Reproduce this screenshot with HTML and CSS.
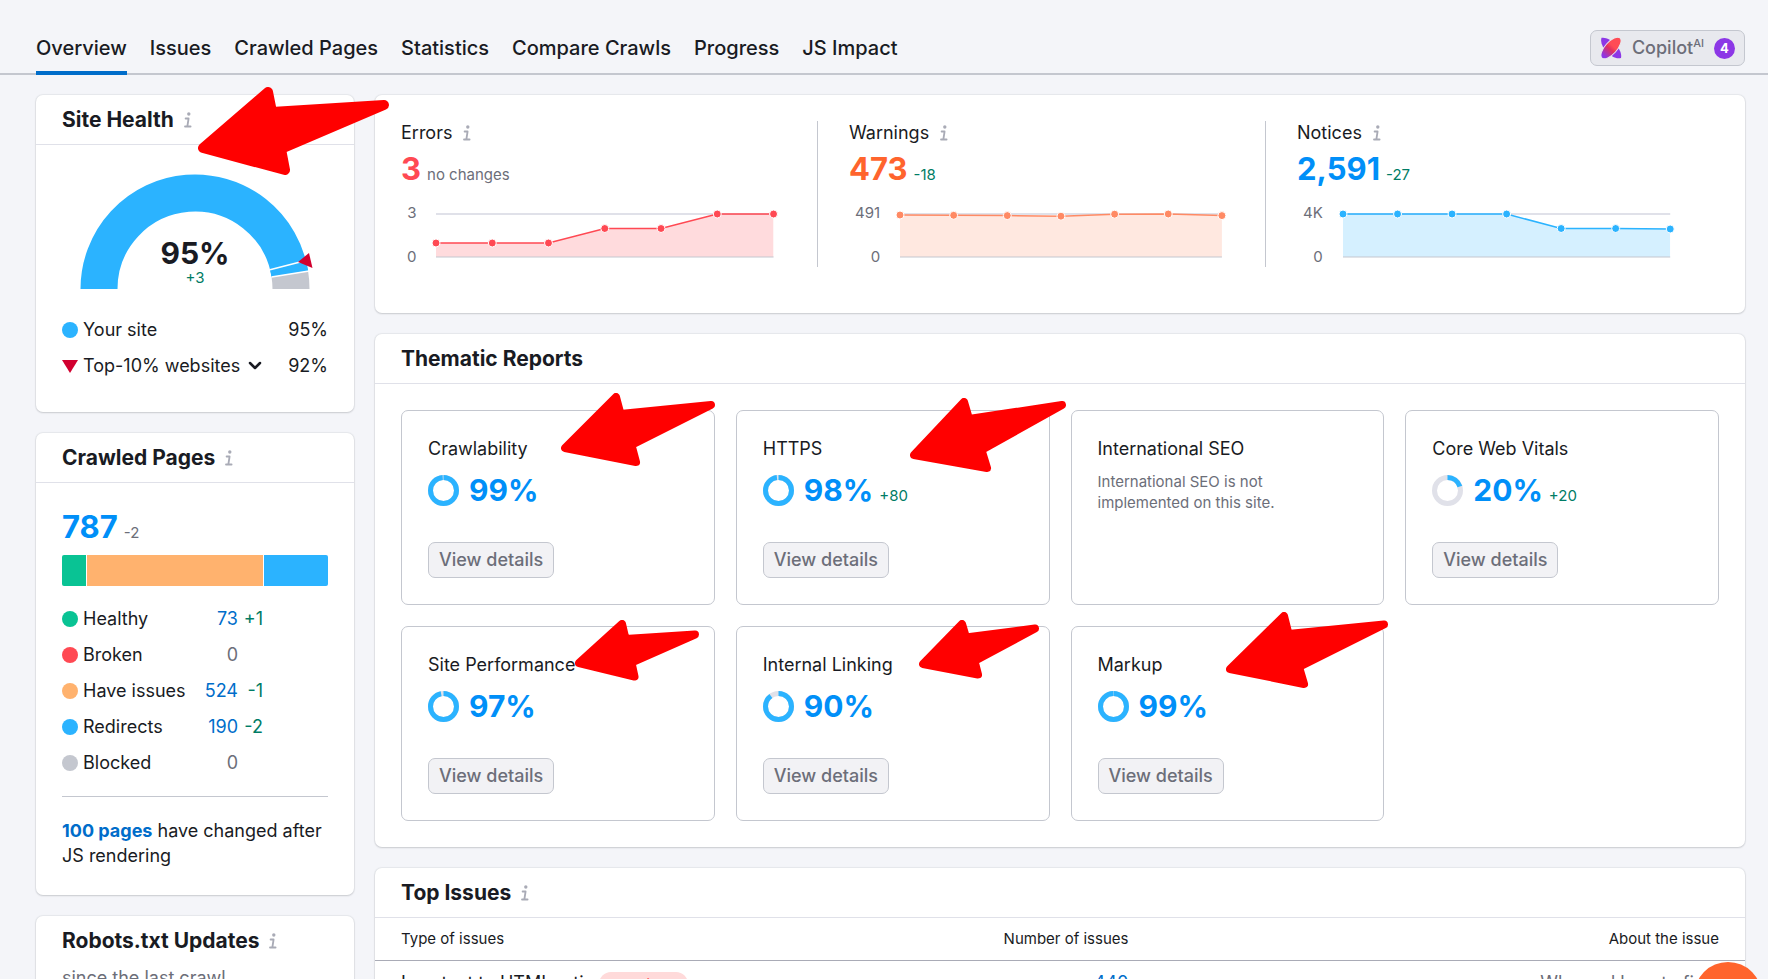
FILE: index.html
```html
<!DOCTYPE html>
<html lang="en">
<head>
	<meta charset="UTF-8">
	<meta name="viewport" content="width=device-width, initial-scale=1.0">
	<title>Site Audit: Overview</title>
	<link rel="stylesheet" href="styles.css">
</head>
<body>
	<svg class="sprite" aria-hidden="true">
		<symbol id="info" viewBox="0 0 8 16">
			<circle cx="4.8" cy="2" r="1.7" fill="currentColor"/>
			<path d="M1.6 6.5h3L3.4 14M1 14.5h5.6" fill="none" stroke="currentColor" stroke-width="1.8" stroke-linecap="round" stroke-linejoin="round"/>
		</symbol>
	</svg>

	<header class="topbar">
		<nav class="tabs">
			<a class="tab active" href="#overview">Overview</a>
			<a class="tab" href="#issues">Issues</a>
			<a class="tab" href="#crawled">Crawled Pages</a>
			<a class="tab" href="#statistics">Statistics</a>
			<a class="tab" href="#compare">Compare Crawls</a>
			<a class="tab" href="#progress">Progress</a>
			<a class="tab" href="#js">JS Impact</a>
		</nav>
		<button class="copilot" type="button">
			<svg class="copilot-icon" viewBox="0 0 22 22" aria-hidden="true">
				<defs>
					<linearGradient id="leaf" x1="0" x2="1">
						<stop offset=".1" stop-color="#8c37e6"/>
						<stop offset=".45" stop-color="#e0305f"/>
						<stop offset=".6" stop-color="#ff4b55"/>
					</linearGradient>
				</defs>
				<path d="M1.500 .800C6 0 11 3 15 7C19 11 22 16 21 21C16 22.500 11 19 7 15C3 11 0 6 1.500 .800Z" fill="#8c37e6"/>
				<ellipse cx="11" cy="11" rx="13.500" ry="6" transform="rotate(-48 11 11)" fill="url(#leaf)" stroke="#e8e9ee"/>
			</svg>
			<span>Copilot<sup>AI</sup></span>
			<span class="copilot-count">4</span>
		</button>
	</header>

	<main class="layout">
		<aside class="column">
			<section class="card health">
				<h2 class="card-title">Site Health <svg class="info"><use href="#info"/></svg></h2>
				<div class="gauge">
					<svg viewBox="0 0 236 116" aria-hidden="true">
						<g fill="none" stroke-width="37">
							<path d="M19 115A96 96 0 0 1 209.818 99.982" stroke="#2bb3ff"/>
							<path d="M207.985 91.126A96 96 0 0 1 209.818 99.982" stroke="#2bb3ff"/>
							<path d="M209.818 99.982A96 96 0 0 1 211 115" stroke="#c4c7cf"/>
						</g>
						<path d="M190 95.700L226 86.400M191.500 103L229.100 97" stroke="#fff" stroke-width="1.500"/>
						<path d="M218 88L229 79L232.500 94Z" fill="#d1002f"/>
					</svg>
					<div class="gauge-value">
						<strong>95%</strong>
						<span class="good">+3</span>
					</div>
				</div>
				<ul class="legend">
					<li><i class="dot blue"></i>Your site <span class="pct">95%</span></li>
					<li>
						<svg class="marker" viewBox="0 0 16 14" aria-hidden="true"><path d="M0 1h16L8 14Z" fill="#d1002f"/></svg>
						<button class="picker" type="button">Top-10% websites
							<svg viewBox="0 0 14 10" aria-hidden="true"><path d="M2 2l5 5 5-5" fill="none" stroke="currentColor" stroke-width="2.500" stroke-linecap="round" stroke-linejoin="round"/></svg>
						</button>
						<span class="pct">92%</span>
					</li>
				</ul>
				<svg class="arrow arrow-health" viewBox="0 0 191 88" stroke-width="10" aria-hidden="true"><path d="M5 61L70 5L74 25L186 18L83 62L87 83Z"/></svg>
			</section>

			<section class="card crawled">
				<h2 class="card-title">Crawled Pages <svg class="info"><use href="#info"/></svg></h2>
				<div class="crawled-body">
					<p class="figure"><strong>787</strong> <small>-2</small></p>
					<div class="stack">
						<span class="green" style="flex-grow: 73"></span>
						<span class="orange" style="flex-grow: 524"></span>
						<span class="blue" style="flex-grow: 190"></span>
					</div>
					<table class="statuses">
						<tr><th><i class="dot green"></i>Healthy</th><td><a href="#healthy">73</a></td><td class="good">+1</td></tr>
						<tr><th><i class="dot red"></i>Broken</th><td>0</td><td></td></tr>
						<tr><th><i class="dot orange"></i>Have issues</th><td><a href="#have-issues">524</a></td><td class="good">-1</td></tr>
						<tr><th><i class="dot blue"></i>Redirects</th><td><a href="#redirects">190</a></td><td class="good">-2</td></tr>
						<tr><th><i class="dot gray"></i>Blocked</th><td>0</td><td></td></tr>
					</table>
					<p class="js-note"><a href="#changed">100 pages</a> have changed after JS rendering</p>
				</div>
			</section>

			<section class="card robots">
				<h2 class="card-title">Robots.txt Updates <svg class="info"><use href="#info"/></svg></h2>
				<p>since the last crawl</p>
			</section>
		</aside>

		<div class="column">
			<section class="card totals">
				<div class="total errors">
					<h3>Errors <svg class="info"><use href="#info"/></svg></h3>
					<p class="figure"><strong>3</strong> <small>no changes</small></p>
					<div class="chart">
						<div class="axis"><span>3</span><span>0</span></div>
						<svg class="plot" aria-hidden="true">
							<line class="grid" x1="0" x2="100%" y1="1" y2="1"/>
							<svg width="100%" height="44" viewBox="0 0 6 44" preserveAspectRatio="none">
								<path class="area" d="M0 30H2L3 15.500H4L5 1H6V44H0Z"/>
								<path class="line" d="M0 30H2L3 15.500H4L5 1H6"/>
							</svg>
							<line class="base" x1="0" x2="100%" y1="44" y2="44"/>
							<circle cx="0" cy="30" r="4"/>
							<circle cx="16.67%" cy="30" r="4"/>
							<circle cx="33.33%" cy="30" r="4"/>
							<circle cx="50%" cy="15.500" r="4"/>
							<circle cx="66.67%" cy="15.500" r="4"/>
							<circle cx="83.33%" cy="1" r="4"/>
							<circle cx="100%" cy="1" r="4"/>
						</svg>
					</div>
				</div>
				<div class="total warnings">
					<h3>Warnings <svg class="info"><use href="#info"/></svg></h3>
					<p class="figure"><strong>473</strong> <small class="good">-18</small></p>
					<div class="chart">
						<div class="axis"><span>491</span><span>0</span></div>
						<svg class="plot" aria-hidden="true">
							<line class="grid" x1="0" x2="100%" y1="1" y2="1"/>
							<svg width="100%" height="44" viewBox="0 0 6 44" preserveAspectRatio="none">
								<path class="area" d="M0 2L1 2.300L2 2.600L3 3.200L4 1.200L5 1L6 2.600V44H0Z"/>
								<path class="line" d="M0 2L1 2.300L2 2.600L3 3.200L4 1.200L5 1L6 2.600"/>
							</svg>
							<line class="base" x1="0" x2="100%" y1="44" y2="44"/>
							<circle cx="0" cy="2" r="4"/>
							<circle cx="16.67%" cy="2.300" r="4"/>
							<circle cx="33.33%" cy="2.600" r="4"/>
							<circle cx="50%" cy="3.200" r="4"/>
							<circle cx="66.67%" cy="1.200" r="4"/>
							<circle cx="83.33%" cy="1" r="4"/>
							<circle cx="100%" cy="2.600" r="4"/>
						</svg>
					</div>
				</div>
				<div class="total notices">
					<h3>Notices <svg class="info"><use href="#info"/></svg></h3>
					<p class="figure"><strong>2,591</strong> <small class="good">-27</small></p>
					<div class="chart">
						<div class="axis"><span>4K</span><span>0</span></div>
						<svg class="plot" aria-hidden="true">
							<line class="grid" x1="0" x2="100%" y1="1" y2="1"/>
							<svg width="100%" height="44" viewBox="0 0 6 44" preserveAspectRatio="none">
								<path class="area" d="M0 1H3L4 15.500H5L6 16V44H0Z"/>
								<path class="line" d="M0 1H3L4 15.500H5L6 16"/>
							</svg>
							<line class="base" x1="0" x2="100%" y1="44" y2="44"/>
							<circle cx="0" cy="1" r="4"/>
							<circle cx="16.67%" cy="1" r="4"/>
							<circle cx="33.33%" cy="1" r="4"/>
							<circle cx="50%" cy="1" r="4"/>
							<circle cx="66.67%" cy="15.500" r="4"/>
							<circle cx="83.33%" cy="15.500" r="4"/>
							<circle cx="100%" cy="16" r="4"/>
						</svg>
					</div>
				</div>
			</section>

			<section class="card">
				<h2 class="card-title">Thematic Reports</h2>
				<div class="reports">
					<article class="report">
						<h3>Crawlability</h3>
						<p class="figure"><svg class="ring" viewBox="0 0 31 31"><circle cx="15.500" cy="15.500" r="13"/><circle class="ring-value" cx="15.500" cy="15.500" r="13" pathLength="100" stroke-dasharray="99 100"/></svg><strong>99%</strong></p>
						<button class="details" type="button">View details</button>
						<svg class="arrow arrow-crawlability" viewBox="0 0 155 73" stroke-width="8" aria-hidden="true"><path d="M4 55L55 4L59.500 21L150 12L70.500 52L75 69Z"/></svg>
					</article>
					<article class="report">
						<h3>HTTPS</h3>
						<p class="figure"><svg class="ring" viewBox="0 0 31 31"><circle cx="15.500" cy="15.500" r="13"/><circle class="ring-value" cx="15.500" cy="15.500" r="13" pathLength="100" stroke-dasharray="98 100"/></svg><strong>98%</strong> <small class="good">+80</small></p>
						<button class="details" type="button">View details</button>
						<svg class="arrow arrow-https" viewBox="0 0 156 74" stroke-width="8" aria-hidden="true"><path d="M4 57L54 4L59 21L152 7L71.500 52L77 70Z"/></svg>
					</article>
					<article class="report">
						<h3>International SEO</h3>
						<p class="report-note">International SEO is not implemented on this site.</p>
					</article>
					<article class="report">
						<h3>Core Web Vitals</h3>
						<p class="figure"><svg class="ring" viewBox="0 0 31 31"><circle cx="15.500" cy="15.500" r="13"/><circle class="ring-value" cx="15.500" cy="15.500" r="13" pathLength="100" stroke-dasharray="20 100"/></svg><strong>20%</strong> <small class="good">+20</small></p>
						<button class="details" type="button">View details</button>
					</article>
					<article class="report">
						<h3>Site Performance</h3>
						<p class="figure"><svg class="ring" viewBox="0 0 31 31"><circle cx="15.500" cy="15.500" r="13"/><circle class="ring-value" cx="15.500" cy="15.500" r="13" pathLength="100" stroke-dasharray="97 100"/></svg><strong>97%</strong></p>
						<button class="details" type="button">View details</button>
						<svg class="arrow arrow-performance" viewBox="0 0 125 61" stroke-width="8" aria-hidden="true"><path d="M4 43L47 4L50.500 19L120 14.500L56.500 42.500L59.500 56.500Z"/></svg>
					</article>
					<article class="report">
						<h3>Internal Linking</h3>
						<p class="figure"><svg class="ring" viewBox="0 0 31 31"><circle cx="15.500" cy="15.500" r="13"/><circle class="ring-value" cx="15.500" cy="15.500" r="13" pathLength="100" stroke-dasharray="90 100"/></svg><strong>90%</strong></p>
						<button class="details" type="button">View details</button>
						<svg class="arrow arrow-linking" viewBox="0 0 121 59" stroke-width="8" aria-hidden="true"><path d="M4 44L43 4L47 17.500L116 8.500L55.500 41L59 54.500Z"/></svg>
					</article>
					<article class="report">
						<h3>Markup</h3>
						<p class="figure"><svg class="ring" viewBox="0 0 31 31"><circle cx="15.500" cy="15.500" r="13"/><circle class="ring-value" cx="15.500" cy="15.500" r="13" pathLength="100" stroke-dasharray="99.500 100"/></svg><strong>99%</strong></p>
						<button class="details" type="button">View details</button>
						<svg class="arrow arrow-markup" viewBox="0 0 163 77" stroke-width="8" aria-hidden="true"><path d="M4 57L58 4L62.500 22L158 12.500L73 55L78 72Z"/></svg>
					</article>
				</div>
			</section>

			<section class="card">
				<h2 class="card-title">Top Issues <svg class="info"><use href="#info"/></svg></h2>
				<table class="issues">
					<thead>
						<tr><th>Type of issues</th><th>Number of issues</th><th>About the issue</th></tr>
					</thead>
					<tbody>
						<tr>
							<td>Low text to HTML ratio <span class="badge">warnings</span></td>
							<td><a href="#low-text">440</a></td>
							<td><a class="muted" href="#fix">Why and how to fix it</a></td>
						</tr>
					</tbody>
				</table>
			</section>
		</div>
	</main>

	<button class="chat" type="button" aria-label="Open chat"></button>
</body>
</html>
```

FILE: styles.css
```css
* {
	box-sizing: border-box;
}

body {
	height: 100vh;
	margin: 0;
	overflow: hidden;
	background: #f4f5f9;
	color: #191b23;
	font: 18px/24px Inter, "Liberation Sans", sans-serif;
}

h2, h3, p, ul {
	margin: 0;
	padding: 0;
}

button {
	font: inherit;
	color: inherit;
	cursor: pointer;
}

a {
	color: #006dca;
	text-decoration: none;
}

.sprite {
	position: absolute;
	width: 0;
	height: 0;
}

.good {
	color: #007c65;
}

.green { background: #09c394; }
.red { background: #ff4953; }
.orange { background: #ffb26e; }
.blue { background: #2bb3ff; }
.gray { background: #c4c7cf; }

/* top bar */

.topbar {
	display: flex;
	justify-content: space-between;
	align-items: flex-end;
	height: 75px;
	padding: 0 23px 0 36px;
	border-bottom: 2px solid #c4c7cf;
}

.tabs {
	display: flex;
	gap: 23px;
	margin-bottom: -2px;
}

.tab {
	padding: 0 0 11px;
	border-bottom: 4px solid transparent;
	color: #191b23;
	font-size: 20px;
	font-weight: 500;
	line-height: 24px;
	white-space: nowrap;
}

.tab.active {
	border-color: #006dca;
}

.copilot {
	display: flex;
	align-items: center;
	gap: 10px;
	height: 36px;
	margin-bottom: 7px;
	padding: 0 9px;
	border: 1px solid #c4c7cf;
	border-radius: 7px;
	background: #e8e9ee;
	color: #6c6e79;
	font-weight: 500;
}

.copilot-icon {
	width: 22px;
	height: 22px;
}

.copilot sup {
	font-size: 11px;
	line-height: 0;
}

.copilot-count {
	width: 21px;
	border-radius: 11px;
	background: #8c37e6;
	color: #fff;
	font-size: 13px;
	font-weight: 700;
	line-height: 21px;
	text-align: center;
}

/* cards */

.layout {
	display: grid;
	grid-template-columns: 318px 1fr;
	align-items: start;
	gap: 21px;
	padding: 20px 23px 21px 36px;
}

.column {
	display: grid;
	gap: 21px;
	min-width: 0;
}

.card {
	position: relative;
	border-radius: 7px;
	background: #fff;
	box-shadow: 0 0 1px 1px rgba(25, 27, 35, .06), 0 1px 2px rgba(25, 27, 35, .14);
}

.card-title {
	display: flex;
	align-items: center;
	gap: 10px;
	height: 50px;
	padding: 0 26px;
	border-bottom: 1px solid #e0e1e9;
	font-size: 21px;
	font-weight: 700;
}

.info {
	width: 8px;
	height: 16px;
	color: #a9abb6;
}

.dot {
	flex: none;
	width: 16px;
	height: 16px;
	border-radius: 50%;
}

.figure {
	display: flex;
	align-items: baseline;
	gap: 6px;
	color: #008ff8;
	line-height: 38px;
}

.figure strong {
	font-size: 31px;
	font-weight: 700;
}

.figure small {
	font-size: 15px;
	line-height: 16px;
}

.figure small:not(.good) {
	color: #6c6e79;
}

/* site health */

.health {
	z-index: 1;
	padding-bottom: 34px;
}

.gauge {
	position: relative;
	padding: 29px 0 0 44px;
}

.gauge svg {
	display: block;
	width: 236px;
	overflow: visible;
}

.gauge-value {
	position: absolute;
	right: 0;
	bottom: 0;
	left: 0;
	display: grid;
	text-align: center;
}

.gauge-value strong {
	font-size: 30px;
	line-height: 26px;
}

.gauge-value span {
	font-size: 15px;
}

.legend {
	display: grid;
	gap: 12px;
	padding: 28px 26px 0;
	list-style: none;
}

.legend li {
	display: flex;
	align-items: center;
	gap: 5px;
}

.pct {
	margin-left: auto;
}

.marker {
	width: 16px;
	height: 14px;
}

.picker {
	display: flex;
	align-items: center;
	gap: 8px;
	padding: 0;
	border: 0;
	background: none;
}

.picker svg {
	width: 14px;
	height: 10px;
}

/* crawled pages */

.crawled-body {
	padding: 25px 26px 27px;
}

.stack {
	display: flex;
	gap: 1px;
	height: 31px;
	margin: 9px 0 15px;
	border-radius: 2px;
	overflow: hidden;
}

.statuses {
	border-collapse: collapse;
	color: #6c6e79;
}

.statuses th {
	display: flex;
	align-items: center;
	gap: 5px;
	width: 136px;
	height: 36px;
	padding: 0;
	color: #191b23;
	font-weight: 400;
}

.statuses td {
	min-width: 24px;
	padding: 0;
	text-align: right;
}

.statuses td:nth-child(2) {
	width: 40px;
}

.statuses td:nth-child(3) {
	width: 25px;
}

.js-note {
	margin-top: 15px;
	padding-top: 21px;
	border-top: 1px solid #c4c7cf;
	line-height: 25px;
}

.js-note a {
	font-weight: 700;
}

.robots .card-title {
	border: 0;
}

.robots p {
	padding: 0 26px 26px;
	color: #6c6e79;
}

/* totals */

.totals {
	display: grid;
	grid-template-columns: repeat(3, 1fr);
	padding: 26px 0 46px 26px;
}

.total {
	height: 146px;
	margin-right: 31px;
	padding-right: 43px;
	border-right: 1px solid #c4c7cf;
}

.total:last-child {
	border-color: transparent;
}

.total h3 {
	display: flex;
	align-items: center;
	gap: 11px;
	font-size: 18px;
	font-weight: 400;
}

.total .figure {
	margin-top: 5px;
}

.errors { color: #ff4953; }
.warnings { color: #ff8a64; }
.notices { color: #2bb3ff; }

.total h3 { color: #191b23; }
.total .info { color: #a9abb6; }
.errors .figure { color: #ff4953; }
.warnings .figure { color: #ff642d; }

.chart {
	display: flex;
	gap: 20px;
	margin-top: 25px;
	padding-left: 6px;
}

.axis {
	display: flex;
	flex-direction: column;
	justify-content: space-between;
	height: 60px;
	margin: -8px 0;
	color: #6c6e79;
	font-size: 15px;
	line-height: 16px;
	text-align: right;
}

.plot {
	flex: 1;
	min-width: 0;
	height: 44px;
	overflow: visible;
}

.plot .grid {
	stroke: #e0e1e9;
	stroke-width: 2;
}

.plot .base {
	stroke: #c4c7cf;
	stroke-width: 1;
}

.plot .area {
	fill: currentColor;
	opacity: .2;
}

.plot .line {
	fill: none;
	stroke: currentColor;
	stroke-width: 1.5px;
	vector-effect: non-scaling-stroke;
}

.plot circle {
	fill: currentColor;
	stroke: #fff;
}

/* thematic reports */

.reports {
	display: grid;
	grid-template-columns: repeat(4, 1fr);
	gap: 21px;
	padding: 26px;
}

.report {
	position: relative;
	display: flex;
	flex-direction: column;
	align-items: flex-start;
	height: 195px;
	padding: 26px;
	border: 1px solid #c4c7cf;
	border-radius: 7px;
}

.report h3 {
	font-size: 18px;
	font-weight: 400;
}

.report .figure {
	margin-top: 10px;
}

.report .figure strong {
	font-size: 30px;
}

.ring {
	align-self: center;
	width: 31px;
	height: 31px;
	margin-right: 4px;
}

.ring circle {
	fill: none;
	stroke: #e0e1e9;
	stroke-width: 5;
}

.ring .ring-value {
	stroke: #2bb3ff;
	transform: rotate(-90deg);
	transform-origin: center;
}

.report-note {
	max-width: 200px;
	margin-top: 10px;
	color: #6c6e79;
	font-size: 15px;
	line-height: 21px;
}

.details {
	height: 36px;
	margin-top: auto;
	padding: 0 10px;
	border: 1px solid #c4c7cf;
	border-radius: 7px;
	background: #f2f2f5;
	color: #6c6e79;
	font-weight: 500;
}

/* top issues */

.issues {
	width: 100%;
	border-collapse: collapse;
	table-layout: fixed;
}

.issues th {
	height: 42px;
	padding: 0;
	border-bottom: 1px solid #a9abb6;
	font-size: 15px;
	font-weight: 400;
	text-align: right;
}

.issues td {
	padding: 10px 0;
	text-align: right;
}

.issues th:first-child,
.issues td:first-child {
	width: 33%;
	padding-left: 26px;
	text-align: left;
}

.issues th:nth-child(2) {
	width: 22%;
}

.issues th:last-child,
.issues td:last-child {
	padding-right: 26px;
}

.muted {
	color: #6c6e79;
}

.badge {
	display: inline-block;
	padding: 0 14px;
	border-radius: 12px;
	background: #ffdada;
	color: #ff1f1f;
	font-size: 14px;
}

/* pointers laid over the cards */

.arrow {
	position: absolute;
	z-index: 2;
	fill: #f00;
	stroke: #f00;
	stroke-linejoin: round;
	pointer-events: none;
}

.arrow-health {
	top: -8px;
	left: 162px;
	width: 191px;
}

.arrow-crawlability {
	top: -18px;
	left: 159px;
	width: 155px;
}

.arrow-https {
	top: -13px;
	left: 173px;
	width: 156px;
}

.arrow-performance {
	top: -7px;
	left: 173px;
	width: 125px;
}

.arrow-linking {
	top: -7px;
	left: 182px;
	width: 121px;
}

.arrow-markup {
	top: -15px;
	left: 154px;
	width: 163px;
}

.chat {
	position: fixed;
	right: 6px;
	bottom: -51px;
	z-index: 3;
	width: 68px;
	height: 68px;
	border: 0;
	border-radius: 50%;
	background: #ff642d;
}
```
